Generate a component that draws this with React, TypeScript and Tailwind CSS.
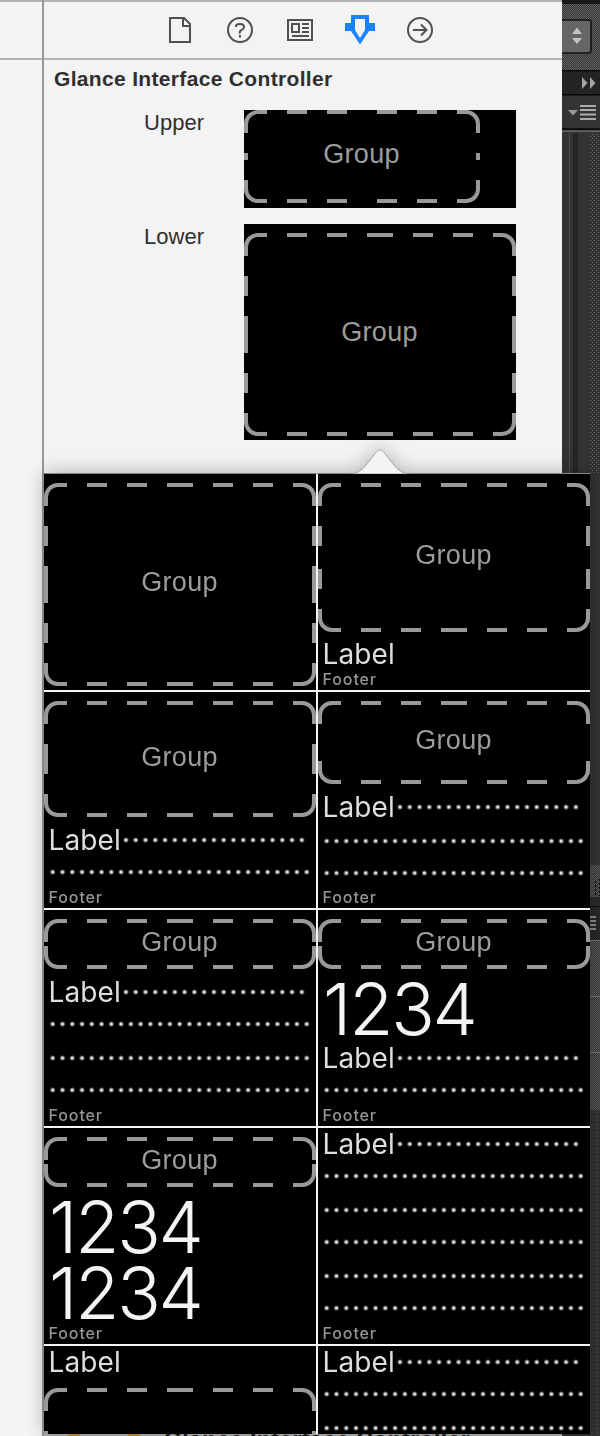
import React from "react";

const SANS = "font-['Liberation_Sans',Arial,sans-serif]";
const INTER = "font-['Inter',sans-serif]";

function segments(length: number): [number, number][] {
  const half = length / 2;
  const out: [number, number][] = [[14, Math.min(23, half)]];
  for (let s = 43; s < half; s += 40) out.push([s, Math.min(s + 20, half)]);
  return out.concat(out.map(([a, b]) => [length - b, length - a] as [number, number]));
}

function GroupFrame({ w = 272, h }: { w?: number; h: number }) {
  const d: string[] = [
    `M2 14A12 12 0 0 1 14 2`,
    `M${w - 14} 2A12 12 0 0 1 ${w - 2} 14`,
    `M${w - 2} ${h - 14}A12 12 0 0 1 ${w - 14} ${h - 2}`,
    `M14 ${h - 2}A12 12 0 0 1 2 ${h - 14}`,
  ];
  segments(w).forEach(([a, b]) => d.push(`M${a} 2H${b}M${a} ${h - 2}H${b}`));
  segments(h).forEach(([a, b]) => d.push(`M2 ${a}V${b}M${w - 2} ${a}V${b}`));
  return (
    <div className="grid shrink-0" style={{ width: w, height: h }}>
      <svg width={w} height={h} fill="none" stroke="#999" strokeWidth="4" className="col-start-1 row-start-1">
        <path d={d.join("")} />
      </svg>
      <span className={`col-start-1 row-start-1 place-self-center pb-[5px] pr-[1px] text-[27px] leading-[30px] tracking-[0.3px] text-[#9c9c9c] ${SANS}`}>
        Group
      </span>
    </div>
  );
}

function Dots({ count, first, width }: { count: number; first: number; width: number }) {
  return (
    <svg width={width} height="8" className="shrink-0">
      {Array.from({ length: count }, (_, i) => (
        <g key={i}>
          <circle cx={first + i * 9.77} cy="4" r="2.6" fill="#5c5c5c" />
          <circle cx={first + i * 9.77} cy="4" r="1.5" fill="#e2e2e2" />
        </g>
      ))}
    </svg>
  );
}

function LabelLine({ dots = true }: { dots?: boolean }) {
  return (
    <div className="flex h-8 shrink-0 items-center">
      <span className={`w-[76px] pl-[4.5px] text-[28px] leading-8 tracking-[0.1px] text-[#dedede] ${INTER}`}>Label</span>
      {dots && <Dots count={19} first={6} width={190} />}
    </div>
  );
}

function DotLine() {
  return (
    <div className="flex h-8 shrink-0 items-center">
      <Dots count={27} first={8.7} width={272} />
    </div>
  );
}

function BigNumber() {
  return (
    <div className={`h-[66px] shrink-0 pl-[5px] text-[72px] font-light leading-[66px] tracking-[-2.2px] text-[#f4f4f4] ${INTER}`}>
      1234
    </div>
  );
}

function Footer() {
  return (
    <div className={`mt-auto h-[18px] shrink-0 pl-[4.5px] text-[16px] font-medium leading-[14px] tracking-[0.9px] text-[#959595] ${INTER}`}>
      Footer
    </div>
  );
}

function Cell({ children }: { children: React.ReactNode }) {
  return <div className="flex h-[216px] flex-col bg-black">{children}</div>;
}

function ToolbarIcons() {
  const s = { fill: "none", stroke: "#505050", strokeWidth: 2 };
  return (
    <div className="flex h-14 items-center gap-7 pl-[120px]">
      <svg width="32" height="32" {...s}>
        <path d="M6 4H20L26 10V28H6ZM19 4V12H26" />
      </svg>
      <svg width="32" height="32" {...s}>
        <circle cx="16" cy="16" r="12" />
        <path d="M12 13V12Q12 10 16 10T20 13Q20 15 17.5 16.2T16 19.5M16 21V23.5" />
      </svg>
      <svg width="32" height="32" {...s}>
        <path d="M4 6H28V26H4ZM8 10H15V18H8ZM18 10H25M18 14H25M18 18H25M8 22H25" />
      </svg>
      <svg width="32" height="32">
        <path fill="#1a84ff" fillRule="evenodd" d="M7 1H25V9H31V17H25L16 30.5L7 17H1V9H7ZM11 5V16L16 24L21 16V5Z" />
      </svg>
      <svg width="32" height="32" {...s}>
        <circle cx="16" cy="16" r="12" />
        <path d="M9 16H22M17 10.5L22.5 16L17 21.5" />
      </svg>
    </div>
  );
}

function DarkStrip() {
  return (
    <div className="flex w-[38px] shrink-0 flex-col bg-[#333]">
      <svg width="38" height="1436">
        <defs>
          <pattern id="grain" width="2" height="2" patternUnits="userSpaceOnUse">
            <rect width="2" height="2" fill="#333" />
            <rect width="1" height="1" fill="#6a6a6a" />
            <rect x="1" y="1" width="1" height="1" fill="#5c5c5c" />
          </pattern>
          <pattern id="sparse" width="4" height="4" patternUnits="userSpaceOnUse">
            <rect width="4" height="4" fill="#333" />
            <rect width="1" height="1" fill="#666" />
            <rect x="2" y="2" width="1" height="1" fill="#666" />
          </pattern>
        </defs>
        <rect width="38" height="70" fill="url(#grain)" />
        <rect width="38" height="4" fill="#181818" />
        <rect x="-6" y="20" width="35" height="33" rx="3" fill="#666" stroke="#111" strokeWidth="1.5" />
        <path d="M15 27.5L20 34H10ZM15 44L20 38H10Z" fill="#c4c4c4" />
        <rect y="70" width="38" height="25" fill="#242424" />
        <rect y="70" width="38" height="1.5" fill="#0c0c0c" />
        <rect y="94" width="38" height="1.5" fill="#080808" />
        <path d="M20 77L25.5 83L20 89ZM28 77L33.5 83L28 89Z" fill="#a4a4a4" />
        <path d="M6 110H16L11 115.5Z" fill="#999" />
        <path d="M18 106H34M18 110H34M18 114.5H34M18 119H34" stroke="#aaa" strokeWidth="1.8" />
        <rect y="128" width="38" height="2" fill="#111" />
        <rect y="130.5" width="38" height="1.5" fill="#666" />
        <rect x="7" y="133" width="1" height="340" fill="#4b4b4b" />
        <rect x="11" y="133" width="5" height="340" fill="#262626" />
        <rect x="27" y="133" width="11" height="340" fill="url(#sparse)" />
        <rect x="28" y="865" width="10" height="32" fill="url(#grain)" />
        <path d="M33.5 881V895M37.5 879V896" stroke="#111" strokeWidth="1.5" strokeDasharray="2 2" />
        <rect x="28" y="897" width="10" height="43" fill="#292929" />
        <rect x="28" y="906" width="10" height="1" fill="#111" />
        <path d="M28 917H34M28 921H34M28 925H34M28 929H34" stroke="#aaa" strokeWidth="1.5" />
        <rect x="28" y="940" width="10" height="170" fill="url(#grain)" />
        <path d="M28 940.5H38M28 996.5H38M28 1052.5H38" stroke="#777" />
        <path d="M35.5 1112V1436" stroke="#666" strokeDasharray="1 3" />
      </svg>
    </div>
  );
}

function Popover() {
  return (
    <div className="absolute left-[44px] top-[448px] w-[546px] drop-shadow-[0_0_10px_rgba(0,0,0,0.28)]">
      <svg width="546" height="26" className="block">
        <path
          d="M306 26C314 25.5 318 22 322 17L332 4.5Q336 -1 340 4.5L350 17C354 22 358 25.5 366 26Z"
          fill="#f4f4f4"
          stroke="#a4a4a4"
          strokeWidth="1"
        />
        <path d="M0 25.5H309M363 25.5H546" stroke="#888" />
      </svg>
      <div className="grid h-[960px] grid-cols-[272px_272px] gap-[2px] overflow-hidden bg-[#f4f4f4]">
        <Cell>
          <div className="mt-[9px]"><GroupFrame h={203} /></div>
        </Cell>
        <Cell>
          <div className="mb-[6px] mt-[9px]"><GroupFrame h={149} /></div>
          <LabelLine dots={false} />
          <Footer />
        </Cell>
        <Cell>
          <div className="mb-[7px] mt-[9px]"><GroupFrame h={116} /></div>
          <LabelLine />
          <DotLine />
          <Footer />
        </Cell>
        <Cell>
          <div className="mb-[7px] mt-[9px]"><GroupFrame h={83} /></div>
          <LabelLine />
          <div className="h-[2px] shrink-0" />
          <DotLine />
          <DotLine />
          <Footer />
        </Cell>
        <Cell>
          <div className="mb-[7px] mt-[9px]"><GroupFrame h={50} /></div>
          <LabelLine />
          <DotLine />
          <div className="h-[2px] shrink-0" />
          <DotLine />
          <DotLine />
          <Footer />
        </Cell>
        <Cell>
          <div className="mb-[7px] mt-[9px]"><GroupFrame h={50} /></div>
          <BigNumber />
          <LabelLine />
          <DotLine />
          <Footer />
        </Cell>
        <Cell>
          <div className="mb-[7px] mt-[9px]"><GroupFrame h={50} /></div>
          <BigNumber />
          <BigNumber />
          <Footer />
        </Cell>
        <Cell>
          <LabelLine />
          <DotLine />
          <div className="h-[2px] shrink-0" />
          <DotLine />
          <DotLine />
          <div className="h-[2px] shrink-0" />
          <DotLine />
          <DotLine />
          <Footer />
        </Cell>
        <Cell>
          <LabelLine dots={false} />
          <div className="mt-[10px]"><GroupFrame h={170} /></div>
        </Cell>
        <Cell>
          <LabelLine />
          <DotLine />
          <div className="h-[2px] shrink-0" />
          <DotLine />
        </Cell>
      </div>
    </div>
  );
}

export default function App() {
  return (
    <div className="relative flex h-[1436px] w-[600px] overflow-hidden bg-[#f4f4f4]">
      <div className="flex w-[42px] shrink-0 flex-col bg-[#f5f5f5]">
        <div className="h-[60px] border-b-2 border-t-2 border-[#b2b2b2]" />
      </div>
      <div className="w-[2px] shrink-0 bg-[#999]" />
      <div className="flex w-[518px] shrink-0 flex-col bg-[#f3f3f3]">
        <div className="h-[60px] shrink-0 border-b-2 border-t-2 border-[#b2b2b2]">
          <ToolbarIcons />
        </div>
        <h1 className={`h-[50px] shrink-0 pl-[10px] pt-[6px] text-[21px] font-bold leading-[26px] tracking-[0.33px] text-[#2f2f2f] ${SANS}`}>
          Glance Interface Controller
        </h1>
        <div className="flex h-[114px] shrink-0">
          <div className={`w-[160px] text-right text-[22px] leading-[26px] text-[#2f2f2f] ${SANS}`}>Upper</div>
          <div className="ml-10 h-[98px] w-[272px] bg-black"><GroupFrame w={236} h={93} /></div>
        </div>
        <div className="flex shrink-0">
          <div className={`w-[160px] text-right text-[22px] leading-[26px] text-[#2f2f2f] ${SANS}`}>Lower</div>
          <div className="ml-10 h-[216px] w-[272px] bg-black pt-[9px]"><GroupFrame h={203} /></div>
        </div>
        <div className="mt-auto flex h-[2px] shrink-0 gap-6 overflow-hidden bg-[#b4b4b4] pl-6">
          <span className="h-[2px] w-3 bg-[#c98f35]" />
          <span className="ml-6 h-[2px] w-3 bg-[#c98f35]" />
          <span className={`-mt-[5px] whitespace-nowrap text-[23px] font-bold leading-[23px] tracking-[0.4px] text-[#222] ${SANS}`}>
            Glance Interface Controller
          </span>
        </div>
      </div>
      <DarkStrip />
      <Popover />
    </div>
  );
}
